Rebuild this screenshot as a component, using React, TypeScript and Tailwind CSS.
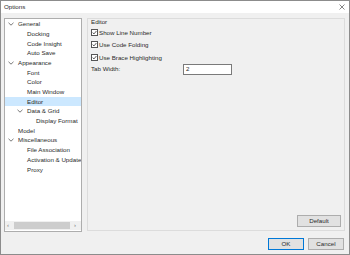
import React from "react";

const Chevron = () => (
  <svg width="6" height="4" viewBox="0 0 6 4" className="shrink-0">
    <path d="M0.5 0.8 L3 3.2 L5.5 0.8" fill="none" stroke="#555" strokeWidth="0.8" />
  </svg>
);

type Item = { label: string; indent: number; chevron?: boolean; selected?: boolean };

const items: Item[] = [
  { label: "General", indent: 0, chevron: true },
  { label: "Docking", indent: 1 },
  { label: "Code Insight", indent: 1 },
  { label: "Auto Save", indent: 1 },
  { label: "Appearance", indent: 0, chevron: true },
  { label: "Font", indent: 1 },
  { label: "Color", indent: 1 },
  { label: "Main Window", indent: 1 },
  { label: "Editor", indent: 1, selected: true },
  { label: "Data & Grid", indent: 1, chevron: true },
  { label: "Display Format", indent: 2 },
  { label: "Model", indent: 0 },
  { label: "Miscellaneous", indent: 0, chevron: true },
  { label: "File Association", indent: 1 },
  { label: "Activation & Updates", indent: 1 },
  { label: "Proxy", indent: 1 },
];

const Check = ({ label }: { label: string }) => (
  <div className="flex items-center h-[12.5px] gap-[1px]">
    <div className="w-[7px] h-[7px] border border-[#555] bg-white flex items-center justify-center shrink-0">
      <svg width="5" height="5" viewBox="0 0 5 5">
        <path d="M0.6 2.6 L2 3.9 L4.4 1" fill="none" stroke="#333" strokeWidth="0.8" />
      </svg>
    </div>
    <span>{label}</span>
  </div>
);

export default function App() {
  return (
    <div
      className="w-[350px] h-[255px] bg-[#f0f0f0] border border-[#8c8c8c] flex flex-col text-[6.2px] text-[#2a2a2a] overflow-hidden"
      style={{ fontFamily: '"Liberation Sans", Arial, sans-serif' }}
    >
      <div className="h-[12px] bg-white flex items-center justify-between pl-[3px] pr-[4px] shrink-0">
        <span>Options</span>
        <svg width="6" height="6" viewBox="0 0 6 6">
          <path d="M0.5 0.5 L5.5 5.5 M5.5 0.5 L0.5 5.5" stroke="#666" strokeWidth="0.8" />
        </svg>
      </div>
      <div className="flex gap-[5px] pl-[3px] pt-[5px]">
        <div className="w-[78px] h-[214px] bg-white border border-[#adadad] flex flex-col">
          <div className="flex-1 overflow-hidden">
            {items.map((it) => (
              <div
                key={it.label}
                className={`h-[9.7px] flex items-center whitespace-nowrap ${it.selected ? "bg-[#cce8ff]" : ""}`}
              >
                <div
                  className={
                    it.indent === 0
                      ? "w-[13px] pl-[3px] flex shrink-0"
                      : it.indent === 1
                      ? "w-[22px] pl-[12px] flex shrink-0"
                      : "w-[31px] flex shrink-0"
                  }
                >
                  {it.chevron ? <Chevron /> : null}
                </div>
                <span>{it.label}</span>
              </div>
            ))}
          </div>
          <div className="h-[9px] bg-[#f0f0f0] flex items-center px-[2px] gap-[2px] mb-[1px]">
            <span className="text-[6px] text-[#777] w-[5px]">‹</span>
            <div className="w-[57px] h-[7px] bg-[#cdcdcd]" />
            <div className="flex-1" />
            <span className="text-[6px] text-[#777] w-[5px]">›</span>
          </div>
        </div>
        <div className="w-[258px] h-[213px] border border-[#dcdcdc] flex flex-col pl-[3px] pr-[3px] pb-[3px]">
          <div className="h-[7px] flex items-center -translate-y-[1.5px]">Editor</div>
          <div className="flex flex-col">
            <Check label="Show Line Number" />
            <Check label="Use Code Folding" />
            <Check label="Use Brace Highlighting" />
          </div>
          <div className="flex items-center h-[11px]">
            <span className="w-[92px]">Tab Width:</span>
            <div className="w-[49px] h-[11px] bg-white border border-[#7a7a7a] flex items-center px-[2px]">2</div>
          </div>
          <div className="flex-1" />
          <div className="flex justify-end">
            <div className="w-[44px] h-[12px] bg-[#e1e1e1] border border-[#adadad] flex items-center justify-center">
              Default
            </div>
          </div>
        </div>
      </div>
      <div className="flex justify-end gap-[4px] pr-[5px] pt-[6px]">
        <div className="w-[36px] h-[12px] bg-[#e1e1e1] border border-[#0078d7] flex items-center justify-center">OK</div>
        <div className="w-[36px] h-[12px] bg-[#e1e1e1] border border-[#adadad] flex items-center justify-center">Cancel</div>
      </div>
    </div>
  );
}
